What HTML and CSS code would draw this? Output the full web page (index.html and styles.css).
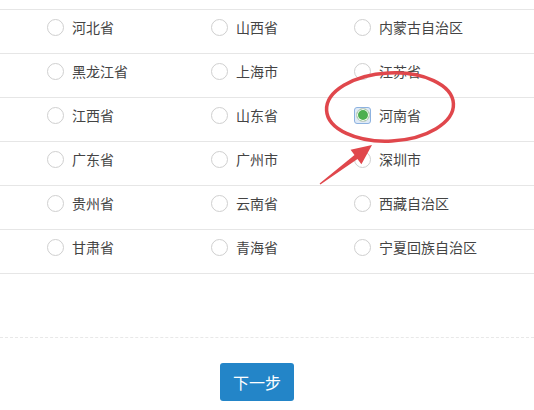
FILE: index.html
```html
<!DOCTYPE html>
<html lang="zh">
<head>
<meta charset="utf-8">
<link rel="stylesheet" href="styles.css">
</head>
<body>
<div class="page">
  <div class="list">
    <div class="row">
      <label class="opt"><span class="radio"></span>河北省</label>
      <label class="opt"><span class="radio"></span>山西省</label>
      <label class="opt"><span class="radio"></span>内蒙古自治区</label>
    </div>
    <div class="row">
      <label class="opt"><span class="radio"></span>黑龙江省</label>
      <label class="opt"><span class="radio"></span>上海市</label>
      <label class="opt"><span class="radio"></span>江苏省</label>
    </div>
    <div class="row">
      <label class="opt"><span class="radio"></span>江西省</label>
      <label class="opt"><span class="radio"></span>山东省</label>
      <label class="opt"><span class="radio checked"><span class="dot"></span></span>河南省</label>
    </div>
    <div class="row">
      <label class="opt"><span class="radio"></span>广东省</label>
      <label class="opt"><span class="radio"></span>广州市</label>
      <label class="opt"><span class="radio"></span>深圳市</label>
    </div>
    <div class="row">
      <label class="opt"><span class="radio"></span>贵州省</label>
      <label class="opt"><span class="radio"></span>云南省</label>
      <label class="opt"><span class="radio"></span>西藏自治区</label>
    </div>
    <div class="row last">
      <label class="opt"><span class="radio"></span>甘肃省</label>
      <label class="opt"><span class="radio"></span>青海省</label>
      <label class="opt"><span class="radio"></span>宁夏回族自治区</label>
    </div>
  </div>
  <div class="divider"></div>
  <div class="actions">
    <button class="btn">下一步</button>
  </div>
  <svg class="annot" width="534" height="410" viewBox="0 0 534 410">
    <ellipse cx="390" cy="107" rx="63.5" ry="34" fill="none" stroke="#e0474c" stroke-width="3.5" transform="rotate(-3 390 107)"/>
    <polygon fill="#e0474c" points="319.6,183.4 354.5,155 350.6,149.8 372,145 361.4,164.2 357.5,159 320.4,184.6"/>
  </svg>
</div>
</body>
</html>
```
FILE: styles.css
```css
html, body {
  margin: 0;
  padding: 0;
  background: #ffffff;
}
.page {
  position: relative;
  width: 534px;
  height: 410px;
  padding-top: 9px;
  box-sizing: border-box;
  font-family: "Noto Sans CJK SC", "Noto Sans", sans-serif;
  font-size: 14px;
  color: #444444;
  overflow: hidden;
}
.row {
  display: grid;
  grid-template-columns: 164px 143px 1fr;
  align-items: center;
  padding-left: 47px;
  padding-bottom: 9px;
  box-sizing: content-box;
  height: 34px;
  border-top: 1px solid #e6e6e6;
}
.row.last {
  border-bottom: 1px solid #e6e6e6;
}
.opt {
  display: flex;
  align-items: center;
  gap: 8px;
  line-height: 17px;
}
.radio {
  width: 17px;
  height: 17px;
  box-sizing: border-box;
  border: 1px solid #cfcfcf;
  border-radius: 50%;
  background: #fff;
  flex: none;
}
.radio.checked {
  border-radius: 3px;
  border: 1px solid #8db2e0;
  background: #dfeaf7;
  display: flex;
  align-items: center;
  justify-content: center;
}
.dot {
  width: 14px;
  height: 14px;
  box-sizing: border-box;
  border-radius: 50%;
  background: #4caf50;
  border: 1px solid #c8cfc8;
  box-shadow: inset 0 0 0 1px #ffffff;
}
.divider {
  margin-top: 63px;
  border-top: 1px dashed #e8e8e8;
}
.actions {
  padding-top: 25px;
  padding-left: 220px;
}
.btn {
  width: 74px;
  height: 38px;
  border: none;
  border-radius: 3px;
  background: #2385c8;
  color: #ffffff;
  font-family: "Noto Sans CJK SC", "Noto Sans", sans-serif;
  font-size: 16px;
  padding: 0;
}
.annot {
  position: absolute;
  left: 0;
  top: 0;
  pointer-events: none;
}
```
